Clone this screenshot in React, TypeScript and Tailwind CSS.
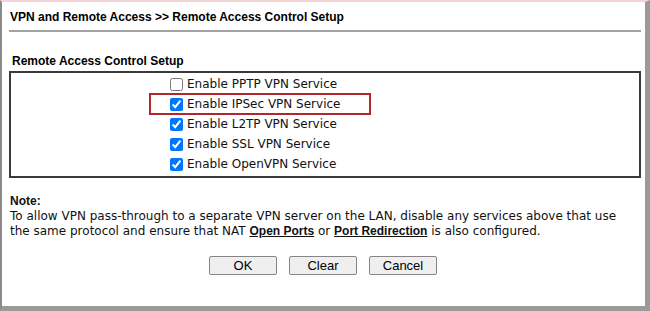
const services = [
  { label: 'Enable PPTP VPN Service', checked: false },
  { label: 'Enable IPSec VPN Service', checked: true, marked: true },
  { label: 'Enable L2TP VPN Service', checked: true },
  { label: 'Enable SSL VPN Service', checked: true },
  { label: 'Enable OpenVPN Service', checked: true },
]

const App = () => {
  return (
    <div className="w-[650px] h-[311px] bg-white overflow-hidden">
      <div className="w-full h-full border-t-2 border-t-[#f3d3d3] border-l-2 border-l-[#8a8a8a] border-r-[5px] border-r-[#9a9a9a] border-b-[5px] border-b-[#9a9a9a] bg-white">
        <div className="px-[7px] pt-[7px]">
          <h1 className="font-['Liberation_Sans',Arial,sans-serif] font-bold text-[12px] leading-[16px] text-black pl-[1px]">
            VPN and Remote Access &gt;&gt; Remote Access Control Setup
          </h1>
          <div className="mt-[5px] mr-[-3px] h-[2px] bg-[#a3a3a3]" />

          <h2 className="mt-[22px] font-['Liberation_Sans',Arial,sans-serif] font-bold text-[12px] leading-[15px] text-black pl-[3px]">
            Remote Access Control Setup
          </h2>

          {/* services box */}
          <div className="mt-[2px] mr-[-3px] border-2 border-[#3a3a3a] pt-[1px] pb-[2px] pl-[159px] flex flex-col font-['DejaVu_Sans',Verdana,sans-serif] text-[12px] text-[#111]">
            {services.map((s) => (
              <div key={s.label} className="relative h-[20px] flex items-center">
                {s.marked && (
                  <span className="absolute left-[-21px] w-[222px] top-[-1px] bottom-[-1px] border-2 border-[#b3262b]" />
                )}
                <input
                  type="checkbox"
                  defaultChecked={s.checked}
                  className="m-0 w-[13px] h-[13px] accent-[#0075ff]"
                />
                <span className="ml-[4px] whitespace-nowrap">{s.label}</span>
              </div>
            ))}
          </div>

          <div className="mt-[16px] pl-[1px] font-['DejaVu_Sans',Verdana,sans-serif] text-[12px] leading-[15px] text-[#111]">
            <div className="font-['Liberation_Sans',Arial,sans-serif] font-bold">Note:</div>
            <div>
              To allow VPN pass-through to a separate VPN server on the LAN, disable any services above that use
              <br />
              the same protocol and ensure that NAT{' '}
              <a className="font-['Liberation_Sans',Arial,sans-serif] font-bold underline">Open Ports</a> or{' '}
              <a className="font-['Liberation_Sans',Arial,sans-serif] font-bold underline">Port Redirection</a> is also
              configured.
            </div>
          </div>

          <div className="mt-[17px] flex gap-[12px] pl-[200px] font-['Liberation_Sans',Arial,sans-serif] text-[13px] text-black">
            <button className="w-[68px] h-[19px] border border-[#858585] bg-[#efefef] rounded-[2px] leading-none">OK</button>
            <button className="w-[68px] h-[19px] border border-[#858585] bg-[#efefef] rounded-[2px] leading-none">Clear</button>
            <button className="w-[68px] h-[19px] border border-[#858585] bg-[#efefef] rounded-[2px] leading-none">Cancel</button>
          </div>
        </div>
      </div>
    </div>
  )
}

export default App
